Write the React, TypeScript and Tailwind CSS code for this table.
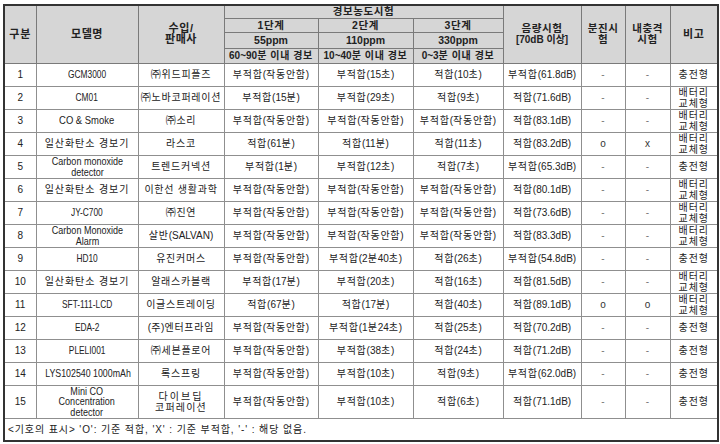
import React from "react";

const HANGUL = /([\u3131-\u318E\uAC00-\uD7A3\u3200-\u32FF]+(?:\s+[\u3131-\u318E\uAC00-\uD7A3\u3200-\u32FF]+)*)/;

function T({ s, sp = "tracking-[0.75px]" }: { s: string; sp?: string }) {
  const parts = s.split(HANGUL);
  return (
    <>
      {parts.map((p, i) =>
        HANGUL.test(p) ? (
          <span key={i} className={sp}>
            {p}
          </span>
        ) : (
          <span key={i}>{p}</span>
        )
      )}
    </>
  );
}

type Row = {
  no: string;
  model: React.ReactNode;
  seller: React.ReactNode;
  s1: string;
  s2: string;
  s3: string;
  vol: string;
  dust: string;
  shock: string;
  note: "c" | "b";
  tall?: boolean;
};

const N = ({ children }: { children: React.ReactNode }) => (
  <span className="inline-block text-[11px] scale-x-[0.76]">{children}</span>
);

const rows: Row[] = [
  { no: "1", model: <N>GCM3000</N>, seller: "㈜위드피플즈", s1: "부적합(작동안함)", s2: "부적합(15초)", s3: "적합(10초)", vol: "부적합(61.8dB)", dust: "-", shock: "-", note: "c" },
  { no: "2", model: <N>CM01</N>, seller: "㈜노바코퍼레이션", s1: "부적합(15분)", s2: "부적합(29초)", s3: "적합(9초)", vol: "적합(71.6dB)", dust: "-", shock: "-", note: "b" },
  { no: "3", model: <span className="inline-block text-[10.5px] scale-x-[0.9]">CO &amp; Smoke</span>, seller: "㈜소리", s1: "부적합(작동안함)", s2: "부적합(작동안함)", s3: "부적합(작동안함)", vol: "적합(83.1dB)", dust: "-", shock: "-", note: "b" },
  { no: "4", model: <T s="일산화탄소 경보기" sp="tracking-[0.9px]" />, seller: "라스코", s1: "적합(61분)", s2: "적합(11분)", s3: "적합(11초)", vol: "적합(83.2dB)", dust: "o", shock: "x", note: "b" },
  { no: "5", model: <span className="inline-block text-[10.5px] scale-x-[0.86] leading-[11px]">Carbon monoxide<br />detector</span>, seller: "트렌드커넥션", s1: "부적합(1분)", s2: "부적합(12초)", s3: "적합(7초)", vol: "부적합(65.3dB)", dust: "-", shock: "-", note: "c" },
  { no: "6", model: <T s="일산화탄소 경보기" sp="tracking-[0.9px]" />, seller: "이한선 생활과학", s1: "부적합(작동안함)", s2: "부적합(작동안함)", s3: "부적합(작동안함)", vol: "적합(80.1dB)", dust: "-", shock: "-", note: "b" },
  { no: "7", model: <N>JY-C700</N>, seller: "㈜진연", s1: "부적합(작동안함)", s2: "부적합(작동안함)", s3: "부적합(작동안함)", vol: "적합(73.6dB)", dust: "-", shock: "-", note: "b" },
  { no: "8", model: <span className="inline-block text-[10.5px] scale-x-[0.86] leading-[11px]">Carbon Monoxide<br />Alarm</span>, seller: "살반(SALVAN)", s1: "부적합(작동안함)", s2: "부적합(작동안함)", s3: "부적합(작동안함)", vol: "적합(83.3dB)", dust: "-", shock: "-", note: "b" },
  { no: "9", model: <N>HD10</N>, seller: "유진커머스", s1: "부적합(작동안함)", s2: "부적합(2분40초)", s3: "적합(26초)", vol: "부적합(54.8dB)", dust: "-", shock: "-", note: "c" },
  { no: "10", model: <T s="일산화탄소 경보기" sp="tracking-[0.9px]" />, seller: "알래스카블랙", s1: "부적합(17분)", s2: "부적합(20초)", s3: "적합(16초)", vol: "적합(81.5dB)", dust: "-", shock: "-", note: "b" },
  { no: "11", model: <N>SFT-111-LCD</N>, seller: "이글스트레이딩", s1: "적합(67분)", s2: "적합(17분)", s3: "적합(40초)", vol: "적합(89.1dB)", dust: "o", shock: "o", note: "b" },
  { no: "12", model: <N>EDA-2</N>, seller: "(주)엔터프라임", s1: "부적합(작동안함)", s2: "부적합(1분24초)", s3: "적합(25초)", vol: "적합(70.2dB)", dust: "-", shock: "-", note: "c" },
  { no: "13", model: <N>PLELI001</N>, seller: "㈜세븐플로어", s1: "부적합(작동안함)", s2: "부적합(38초)", s3: "적합(24초)", vol: "적합(71.2dB)", dust: "-", shock: "-", note: "c" },
  { no: "14", model: <span className="inline-block text-[10.5px] scale-x-[0.84]">LYS102540 1000mAh</span>, seller: "록스프링", s1: "부적합(작동안함)", s2: "부적합(10초)", s3: "적합(9초)", vol: "부적합(62.0dB)", dust: "-", shock: "-", note: "c" },
  { no: "15", model: <span className="inline-block text-[10.5px] scale-x-[0.86] leading-[10.5px]">Mini CO<br />Concentration<br />detector</span>, seller: <span className="leading-[11px]"><T s="다이브딥" sp="tracking-[2px]" /><br /><T s="코퍼레이션" sp="tracking-[1.2px]" /></span>, s1: "부적합(작동안함)", s2: "부적합(10초)", s3: "적합(6초)", vol: "적합(71.1dB)", dust: "-", shock: "-", note: "c", tall: true },
];

const td = "border border-[#8f8f8f] text-center align-middle p-0 whitespace-nowrap";
const th = "border border-[#7a7a7a] bg-[#d6d6d6] text-center align-middle p-0 font-bold whitespace-nowrap text-[10.5px] tracking-[0.6px]";

const cell = (v: React.ReactNode) => (typeof v === "string" ? <T s={v} /> : v);

export default function App() {
  return (
    <div className="w-[720px] h-[444px] bg-white pt-[4px] pl-[3px]" style={{ fontFamily: '"Liberation Sans", "Noto Sans CJK KR", sans-serif' }}>
      <table className="table-fixed border-collapse border-2 border-[#333] text-[10px] leading-[11px] text-[#222] w-[714px]">
        <colgroup>
          <col className="w-[32px]" />
          <col className="w-[102px]" />
          <col className="w-[86px]" />
          <col className="w-[94px]" />
          <col className="w-[95px]" />
          <col className="w-[90px]" />
          <col className="w-[78px]" />
          <col className="w-[44px]" />
          <col className="w-[45px]" />
          <col className="w-[48px]" />
        </colgroup>
        <thead>
          <tr className="h-[13px]">
            <th rowSpan={4} className={`${th} text-[11px] tracking-[1px]`}>구분</th>
            <th rowSpan={4} className={`${th} text-[11px]`}>모델명</th>
            <th rowSpan={4} className={`${th} text-[11px]`}>수입/<br />판매사</th>
            <th colSpan={3} className={th}>경보농도시험</th>
            <th rowSpan={4} className={th}>음량시험<br /><span className="tracking-normal text-[10px]">[70dB 이상]</span></th>
            <th rowSpan={4} className={th}>분진시<br />험</th>
            <th rowSpan={4} className={th}>내충격<br />시험</th>
            <th rowSpan={4} className={`${th} text-[11px]`}>비고</th>
          </tr>
          <tr className="h-[14px]">
            <th className={th}>1단계</th>
            <th className={th}>2단계</th>
            <th className={th}>3단계</th>
          </tr>
          <tr className="h-[16px]">
            <th className={`${th} tracking-normal`}>55ppm</th>
            <th className={`${th} tracking-normal`}>110ppm</th>
            <th className={`${th} tracking-normal`}>330ppm</th>
          </tr>
          <tr className="h-[15px]">
            <th className={`${th} border-t-[#555] tracking-normal text-[10px]`}><T s="60~90분 이내 경보" sp="tracking-[0.6px]" /></th>
            <th className={`${th} border-t-[#555] tracking-normal text-[10px]`}><T s="10~40분 이내 경보" sp="tracking-[0.6px]" /></th>
            <th className={`${th} border-t-[#555] tracking-normal text-[10px]`}><T s="0~3분 이내 경보" sp="tracking-[0.6px]" /></th>
          </tr>
        </thead>
        <tbody>
          {rows.map((r) => (
            <tr key={r.no} className={r.tall ? "h-[32px]" : "h-[23px]"}>
              <td className={td}>{r.no}</td>
              <td className={td}>{r.model}</td>
              <td className={td}>{cell(r.seller)}</td>
              <td className={td}>{cell(r.s1)}</td>
              <td className={td}>{cell(r.s2)}</td>
              <td className={td}>{cell(r.s3)}</td>
              <td className={td}>{cell(r.vol)}</td>
              <td className={`${td} text-[#777]`}>{r.dust === "o" ? <span className="text-[#333]">o</span> : r.dust}</td>
              <td className={`${td} text-[#777]`}>{r.shock === "-" ? "-" : <span className="text-[#333]">{r.shock}</span>}</td>
              <td className={td}>{r.note === "c" ? <T s="충전형" sp="tracking-[1px]" /> : <span><T s="배터리" sp="tracking-[1px]" /><br /><T s="교체형" sp="tracking-[1px]" /></span>}</td>
            </tr>
          ))}
          <tr className="h-[23px]">
            <td colSpan={10} className="border border-[#8f8f8f] text-left align-middle pl-[3px] py-0 whitespace-pre text-[10px] tracking-[0.9px]">
              {"<기호의 표시> 'O': 기준 적합, 'X' : 기준 부적합, '-' : 해당 없음."}
            </td>
          </tr>
        </tbody>
      </table>
    </div>
  );
}
